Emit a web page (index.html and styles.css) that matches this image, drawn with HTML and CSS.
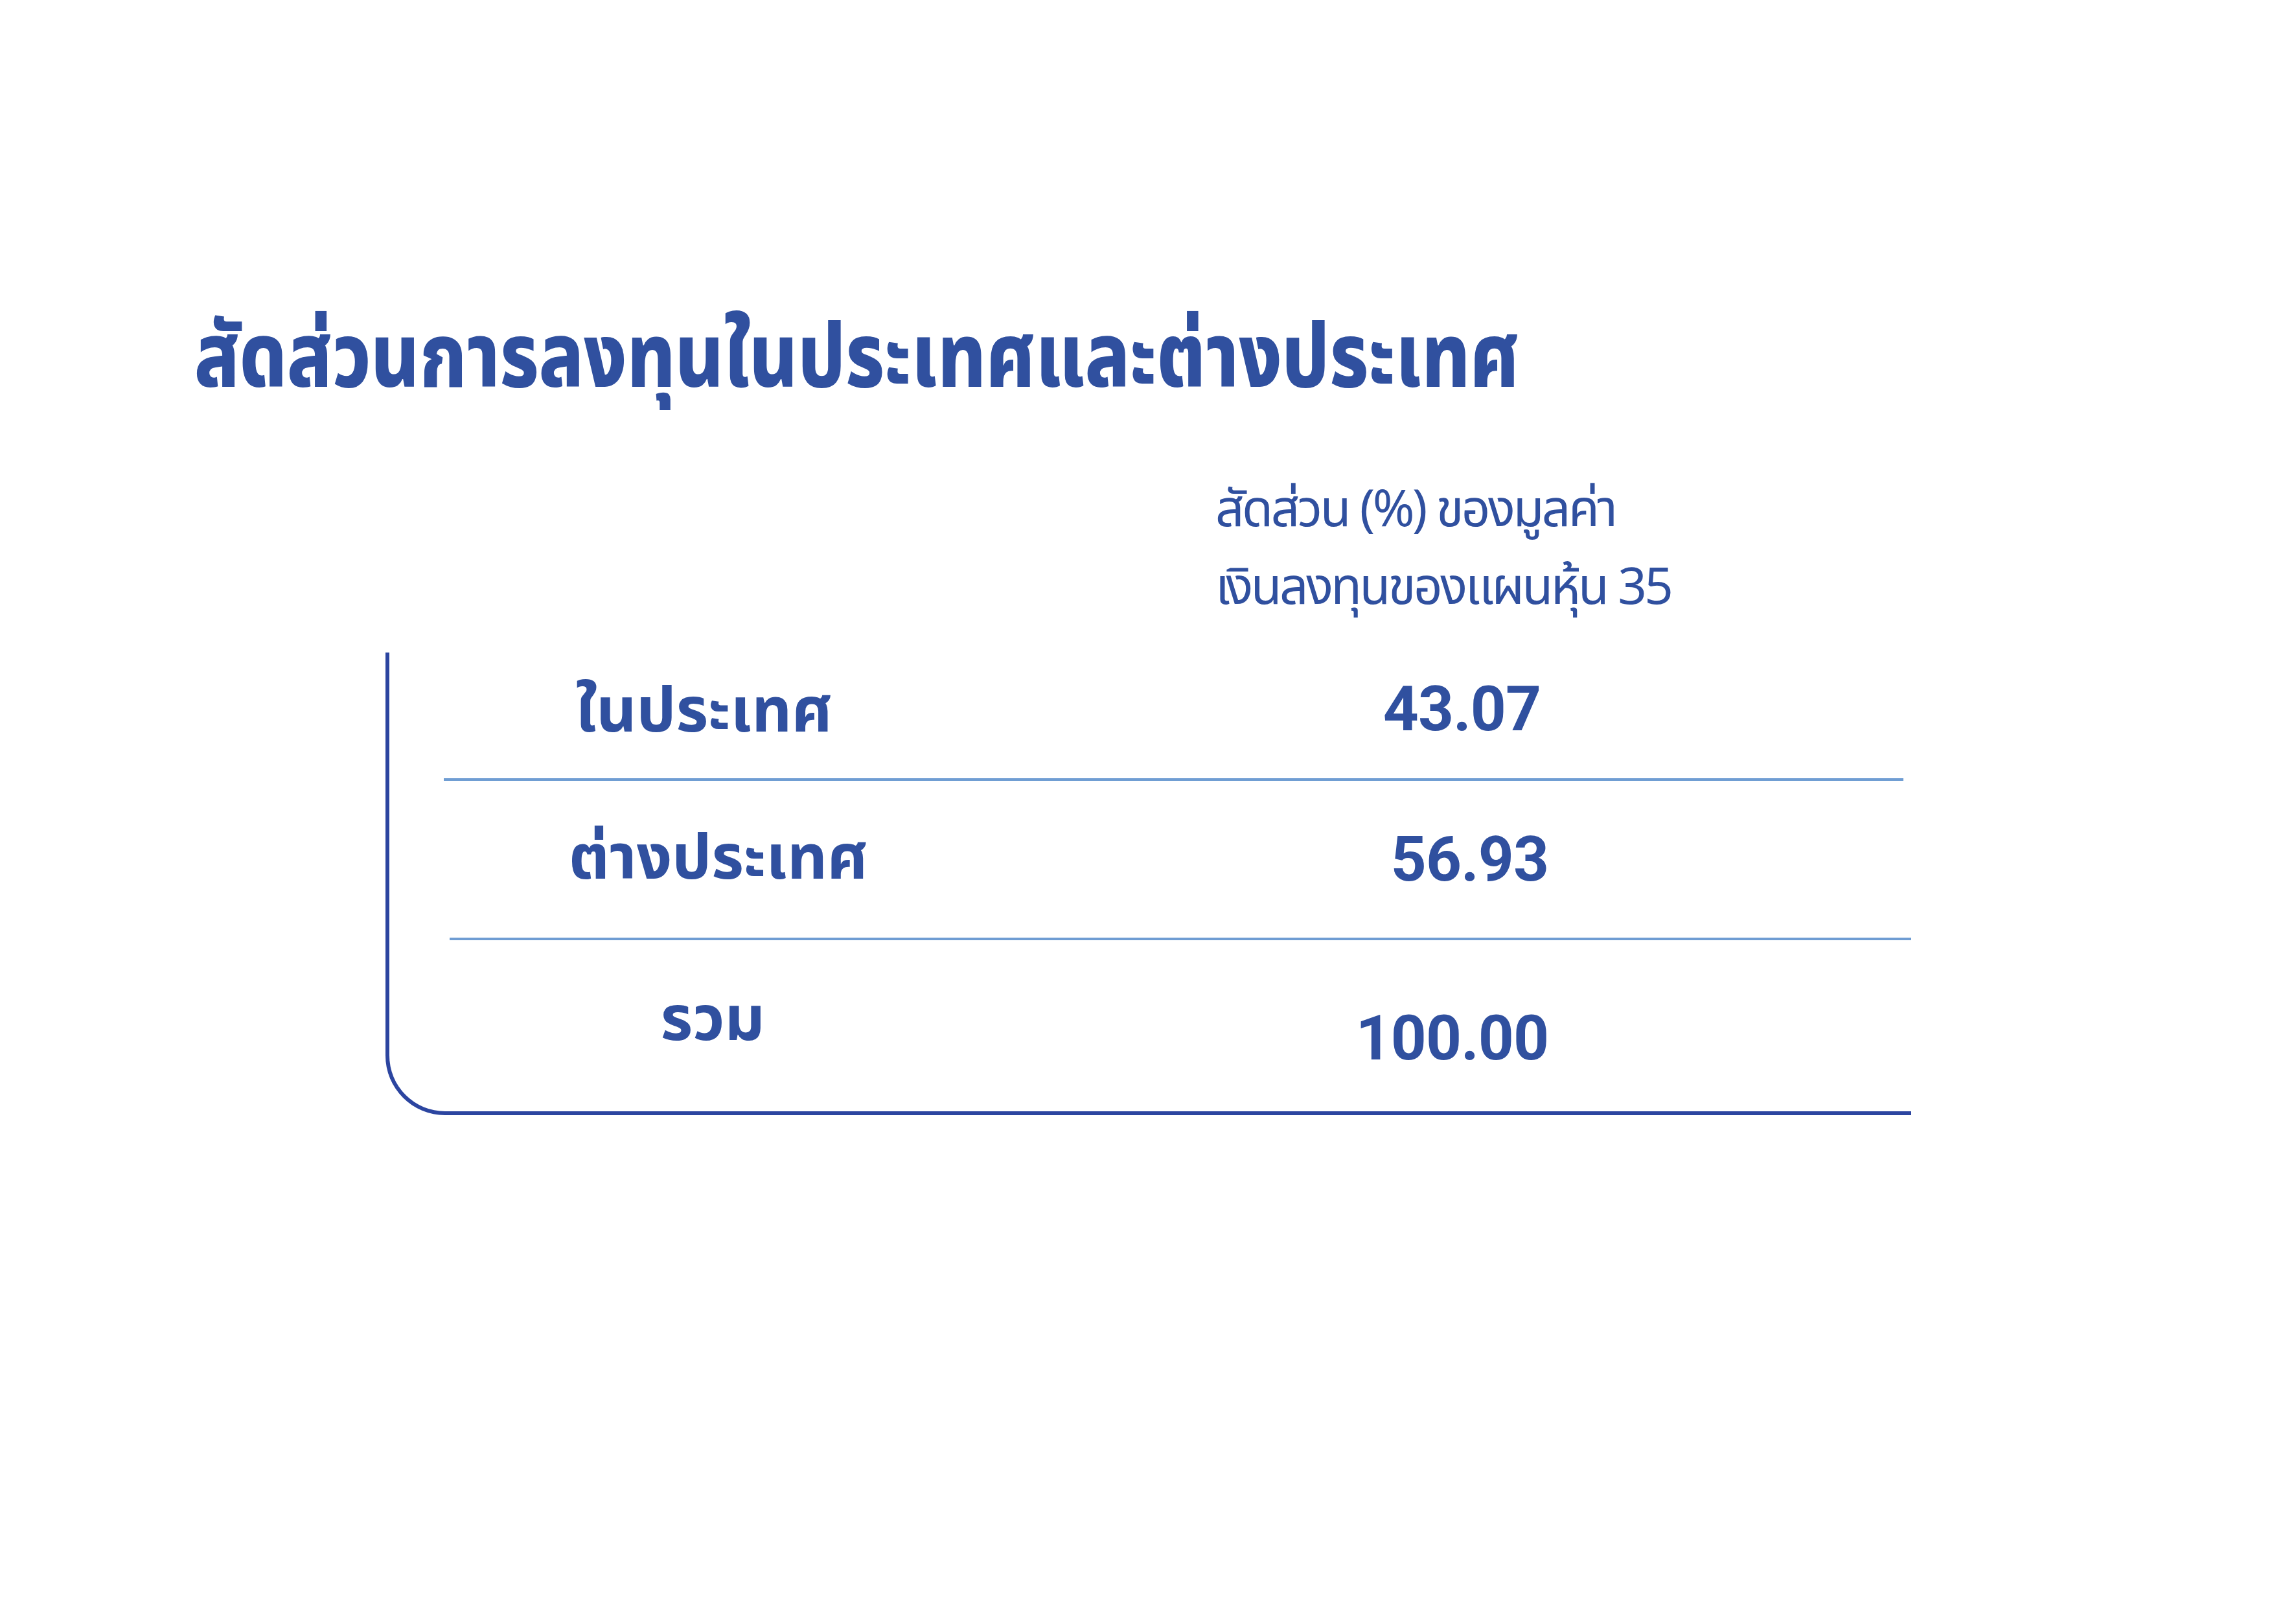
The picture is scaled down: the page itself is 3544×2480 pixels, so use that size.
FILE: index.html
```html
<!DOCTYPE html>
<html lang="th">
<head>
<meta charset="utf-8">
<title>สัดส่วนการลงทุนในประเทศและต่างประเทศ</title>
<link rel="stylesheet" href="styles.css">
</head>
<body>
<main class="page">
  <h1 class="title">สัดส่วนการลงทุนในประเทศและต่างประเทศ</h1>
  <section class="table">
    <div class="colhead">
      <p>สัดส่วน (%) ของมูลค่า</p>
      <p>เงินลงทุนของแผนหุ้น 35</p>
    </div>
    <div class="frame">
      <div class="row row-1"><span class="label">ในประเทศ</span><span class="value">43.07</span></div>
      <div class="row row-2"><span class="label">ต่างประเทศ</span><span class="value">56.93</span></div>
      <div class="row row-3"><span class="label">รวม</span><span class="value">100.00</span></div>
    </div>
  </section>
</main>
</body>
</html>
```
FILE: styles.css
```css
html, body {
  margin: 0;
  padding: 0;
  background: #ffffff;
}
.page {
  width: 3544px;
  height: 2480px;
  box-sizing: border-box;
  padding-top: 475px;
  font-family: "Noto Sans Thai", "Noto Sans", sans-serif;
  color: #30509f;
}
.title {
  margin: 0 0 0 300px;
  font-size: 138px;
  font-weight: 800;
  line-height: 160px;
  white-space: nowrap;
  transform: scaleX(0.83);
  transform-origin: left center;
}
.table {
  margin-top: 93px;
}
.colhead {
  margin: 0 0 39px 1876px;
  font-size: 78px;
  font-weight: 400;
  line-height: 120px;
  letter-spacing: -3.5px;
}
.colhead p {
  margin: 0;
}
.frame {
  margin-left: 595px;
  width: 2355px;
  box-sizing: border-box;
  border-left: 6px solid #2c45a0;
  border-bottom: 6px solid #2c45a0;
  border-bottom-left-radius: 92px;
  display: flex;
  flex-direction: column;
}
.row {
  display: grid;
  grid-template-columns: 830px 1fr;
  align-items: center;
  margin-left: 84px;
  padding-right: 560px;
  font-weight: 700;
  font-size: 96px;
}
.row-1 {
  height: 194px;
  border-bottom: 4px solid #6f9dd3;
  margin-right: 12px;
}
.row-1 .label {
  padding: 0 26px 10px 0;
}
.row-1 .value {
  padding-bottom: 20px;
}
.row-2 {
  height: 242px;
  border-bottom: 4px solid #6f9dd3;
  margin-left: 93px;
}
.row-3 {
  height: 264px;
}
.row-3 .label {
  padding-bottom: 16px;
}
.row-3 .value {
  padding-top: 38px;
}
.label {
  text-align: center;
}
.value {
  text-align: right;
  font-family: "Roboto", "Liberation Sans", sans-serif;
  letter-spacing: -1px;
}
```
